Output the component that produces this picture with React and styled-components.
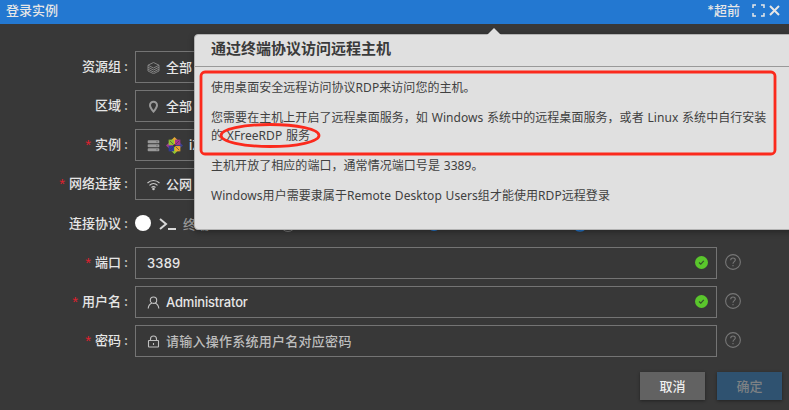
import React from "react";
import styled, { createGlobalStyle } from "styled-components";

const Global = createGlobalStyle`
  * { box-sizing: border-box; }
  body { margin: 0; background: #383838; overflow: hidden; }
`;

const Window = styled.main`
  position: relative;
  width: 789px;
  height: 410px;
  overflow: hidden;
  background: #383838;
  color: #e6e6e6;
  font: 500 13px/20px Inter, "Noto Sans CJK SC", sans-serif;
`;

const TitleBar = styled.header`
  display: flex;
  align-items: center;
  height: 24px;
  padding: 0 8px 4px 6px;
  background: #2378d1;
  white-space: nowrap;
`;

const Title = styled.span`
  flex: 1;
`;

const Author = styled.span`
  margin-right: 12px;
`;

const TitleIcon = styled.svg`
  width: 13px;
  height: 13px;
  margin-left: ${(p) => p.$gap || 0}px;
  fill: none;
  stroke: #e6e6e6;
  stroke-width: ${(p) => p.$weight};
`;

const Form = styled.form`
  display: flex;
  flex-direction: column;
  gap: 7px;
  padding-top: 27px;
`;

const Row = styled.div`
  display: flex;
  align-items: center;
  height: ${(p) => p.$height || 32}px;
`;

const Label = styled.label`
  display: flex;
  justify-content: flex-end;
  width: 128px;
  margin-right: 7px;
  padding-bottom: 2px;
  white-space: nowrap;
`;

const Required = styled.span`
  margin-right: 4px;
  padding-top: 1px;
  color: #e0202e;
  font: 400 15px/20px "Liberation Sans", sans-serif;
`;

const Colon = styled.span`
  width: 7px;
  padding-left: 3px;
`;

const Field = styled.div`
  display: flex;
  align-items: center;
  gap: 6px;
  width: 582px;
  height: 32px;
  padding: 0 8px 0 11px;
  border: 1px solid #747474;
  color: ${(p) => (p.$placeholder ? "#bdbdbd" : "#e6e6e6")};
  letter-spacing: ${(p) => (p.$placeholder ? 0.26 : p.$tracking || 0)}px;
`;

const Value = styled.span`
  flex: 1;
  white-space: nowrap;
`;

const Glyph = styled.svg`
  flex: none;
  width: 13px;
  height: 13px;
  fill: none;
  stroke: ${(p) => p.$color || "#aaa"};
  stroke-width: 1.1;
`;

const Logo = styled.svg`
  flex: none;
  width: 17px;
  height: 17px;
`;

const Valid = styled.svg`
  flex: none;
  width: 13px;
  height: 13px;
  margin-bottom: 1px;
`;

const Help = styled.svg`
  flex: none;
  width: 16px;
  height: 16px;
  margin: 0 0 2px 8px;
  fill: none;
  stroke: #777;
  stroke-width: 1.1;
`;

const Radio = styled.span`
  flex: none;
  width: 16px;
  height: 16px;
  margin-bottom: 1px;
  border-radius: 50%;
  background: #fff;
`;

const Prompt = styled.svg`
  width: 18px;
  height: 14px;
  margin: 0 6px 0 8px;
  fill: none;
  stroke: #d8d8d8;
  stroke-width: 2;
`;

const Muted = styled.span`
  color: #999;
`;

const Actions = styled.footer`
  display: flex;
  justify-content: flex-end;
  gap: 12px;
  padding: 15px 7px 0 0;
`;

const Button = styled.button`
  width: 65px;
  height: 28px;
  padding: 0;
  border: 0;
  background: ${(p) => (p.$primary ? "#2f5270" : "#626262")};
  color: ${(p) => (p.$primary ? "#7d8184" : "#eee")};
  font: inherit;
  box-shadow: 0 1px 3px #0006;
`;

const Popover = styled.aside`
  position: absolute;
  top: 34px;
  left: 194px;
  width: 610px;
  height: 196px;
  border: 1px solid #b3b3b3;
  border-radius: 4px;
  background: #e0e0e0;
  color: #404040;
  font: 400 12px/18px "Noto Sans", "Noto Sans CJK SC", sans-serif;
  box-shadow: 0 2px 6px #0005;
`;

const Arrow = styled.svg`
  position: absolute;
  top: 28px;
  left: 487px;
  width: 14px;
  height: 7px;
  fill: #e0e0e0;
`;

const PopTitle = styled.h2`
  height: 32px;
  margin: 0;
  padding: 3px 16px;
  border-bottom: 1px solid #999;
  color: #3a3a3a;
  font: 700 15px/20px "Noto Sans CJK SC", sans-serif;
`;

const PopBody = styled.div`
  padding: 12px 16px;
  letter-spacing: 0.05px;
  word-spacing: 0.6px;
`;

const Paragraph = styled.p`
  margin: 0 0 12px;
  white-space: nowrap;
`;

const Markup = styled.svg`
  position: absolute;
  top: 68px;
  left: 197px;
  width: 584px;
  height: 92px;
  fill: none;
  stroke: #fb2a1d;
  stroke-width: 2.8;
`;

const HiddenRing = styled.svg`
  position: absolute;
  top: 216px;
  left: 280px;
  width: 310px;
  height: 17px;
  fill: none;
`;

const Layers = () => (
  <Glyph viewBox="0 0 13 13" $color="#8a8a8a">
    <path d="M6.5 1.500 12 4.200 6.500 7 1 4.200zM1 6.200 6.500 9 12 6.200M1 8.200 6.500 11 12 8.200M1 10l5.500 2.700L12 10M1 4.200V10M12 4.200V10" strokeWidth=".9" />
  </Glyph>
);

const Pin = () => (
  <Glyph viewBox="0 0 13 13" $color="#999">
    <path strokeWidth="2" d="M10 5.200c0 2.300-3.500 6.300-3.500 6.300S3 7.500 3 5.200a3.500 3.500 0 0 1 7 0z" />
  </Glyph>
);

const Server = () => (
  <Glyph viewBox="0 0 13 13">
    <g stroke="none" fill="#999">
      <rect x=".7" y="1.200" width="11.600" height="3" rx=".8" />
      <rect x=".7" y="5.200" width="11.600" height="3" rx=".8" />
      <rect x=".7" y="9.200" width="11.600" height="3" rx=".8" />
    </g>
    <path stroke="#555" d="M9.500 2.700h1M9.500 6.700h1M9.500 10.700h1" />
  </Glyph>
);

const Wifi = () => (
  <Glyph viewBox="0 0 13 13" $color="#c9c9c9">
    <path d="M.5 5c3.500-3.300 8.500-3.300 12 0M2.500 7.300c2.300-2.200 5.700-2.200 8 0M4.500 9.500c1.200-1.100 2.800-1.100 4 0" />
    <circle cx="6.500" cy="11" r=".7" fill="#c9c9c9" />
  </Glyph>
);

const User = () => (
  <Glyph viewBox="0 0 13 13" $color="#c4c4c4">
    <circle cx="6.500" cy="4.200" r="3.200" />
    <path d="M1.200 12.500c.2-3 2-4.700 3.800-5.500M11.800 12.500C11.600 9.500 9.800 7.800 8 7" />
  </Glyph>
);

const Lock = () => (
  <Glyph viewBox="0 0 13 13" $color="#c0c0c0">
    <rect x="1.500" y="5.500" width="10" height="6.500" rx=".5" />
    <path d="M3.500 5.500V4a3 3 0 0 1 6 0v1.500M6.500 8v2" />
  </Glyph>
);

const CentOS = () => (
  <Logo viewBox="0 0 16 16">
    <path fill="#e5a832" d="m8 0 2.700 2.700L8 7 5.300 2.700z" />
    <path fill="#9a3c8e" d="M0 8l2.700-2.700L7 8l-4.300 2.700z" />
    <path fill="#39428d" d="m16 8-2.700-2.700L9 8l4.300 2.700z" />
    <path fill="#91c62f" d="m8 16-2.700-2.700L8 9l2.700 4.300z" />
    <path fill="#91c62f" d="M2.500 2.500h5v5h-5z" />
    <path fill="#a8328e" d="M8.500 2.500h5v5h-5z" />
    <path fill="#2f3b98" d="M2.500 8.500h5v5h-5z" />
    <path fill="#eaa62d" d="M8.500 8.500h5v5h-5z" />
    <path stroke="#45364a" strokeWidth=".6" d="m3.500 3.500 3.500 3.500M12.500 3.500 9 7M3.500 12.500 7 9M12.500 12.500 9 9" />
  </Logo>
);

const Check = () => (
  <Valid viewBox="0 0 13 13">
    <circle cx="6.500" cy="6.500" r="6.500" fill="#5ac62c" />
    <path d="m4 6.500 1.800 1.700 3-3.400" fill="none" stroke="#33532a" strokeWidth="1.200" />
  </Valid>
);

const HelpIcon = () => (
  <Help viewBox="0 0 16 16">
    <circle cx="8" cy="8" r="7.400" />
    <path d="M5.700 6.300c0-3 4.600-3 4.600-.2 0 1.600-2.300 1.600-2.300 3.600M8 11v1.300" />
  </Help>
);

const FieldLabel = ({ required, children }) => (
  <Label>
    {required && <Required>*</Required>}
    {children}
    <Colon>:</Colon>
  </Label>
);

function FormRow({ label, required, icon, value, valid, help, placeholder, tracking }) {
  return (
    <Row>
      <FieldLabel required={required}>{label}</FieldLabel>
      <Field $placeholder={placeholder} $tracking={tracking}>
        {icon}
        <Value>{value}</Value>
        {valid && <Check />}
      </Field>
      {help && <HelpIcon />}
    </Row>
  );
}

export default function App() {
  return (
    <Window>
      <Global />
      <TitleBar>
        <Title>登录实例</Title>
        <Author>*超前</Author>
        <TitleIcon viewBox="0 0 13 13" $weight="1.500">
          <path d="M1 4V1h3M9 1h3v3M12 9v3H9M4 12H1V9" />
        </TitleIcon>
        <TitleIcon viewBox="0 0 13 13" $weight="2" $gap={3}>
          <path d="m2 2 9 9M11 2l-9 9" />
        </TitleIcon>
      </TitleBar>
      <Form>
        <FormRow label="资源组" icon={<Layers />} value="全部" />
        <FormRow label="区域" icon={<Pin />} value="全部" />
        <FormRow label="实例" required icon={<><Server /><CentOS /></>} value="iZ" />
        <FormRow label="网络连接" required icon={<Wifi />} value="公网" />
        <Row $height={33}>
          <FieldLabel>连接协议</FieldLabel>
          <Radio />
          <Prompt viewBox="0 0 18 14">
            <path d="m1 2 6 5-6 5M9 12h8" />
          </Prompt>
          <Muted>终端</Muted>
        </Row>
        <FormRow label="端口" required value="3389" tracking={0.2} valid help />
        <FormRow label="用户名" required icon={<User />} value="Administrator" tracking={-0.18} valid help />
        <FormRow label="密码" required icon={<Lock />} value="请输入操作系统用户名对应密码" placeholder help />
      </Form>
      <Actions>
        <Button type="button">取消</Button>
        <Button type="button" $primary>确定</Button>
      </Actions>
      <HiddenRing viewBox="0 0 310 17">
        <circle cx="8" cy="8" r="7.500" stroke="#777" />
        <circle cx="154" cy="8" r="7" fill="#2378d1" />
        <circle cx="300" cy="8" r="7" stroke="#2378d1" strokeWidth="1.500" />
      </HiddenRing>
      <Popover>
        <PopTitle>通过终端协议访问远程主机</PopTitle>
        <PopBody>
          <Paragraph>使用桌面安全远程访问协议RDP来访问您的主机。</Paragraph>
          <Paragraph>
            您需要在主机上开启了远程桌面服务，如 Windows 系统中的远程桌面服务，或者 Linux 系统中自行安装
            <br />的 XFreeRDP 服务
          </Paragraph>
          <Paragraph>主机开放了相应的端口，通常情况端口号是 3389。</Paragraph>
          <Paragraph>Windows用户需要隶属于Remote Desktop Users组才能使用RDP远程登录</Paragraph>
        </PopBody>
      </Popover>
      <Arrow viewBox="0 0 14 7"><path d="m0 7 7-7 7 7z" /></Arrow>
      <Markup viewBox="0 0 584 92">
        <rect x="4" y="4" width="574" height="82" rx="4" />
        <ellipse cx="73" cy="67.500" rx="49" ry="11" />
      </Markup>
    </Window>
  );
}
